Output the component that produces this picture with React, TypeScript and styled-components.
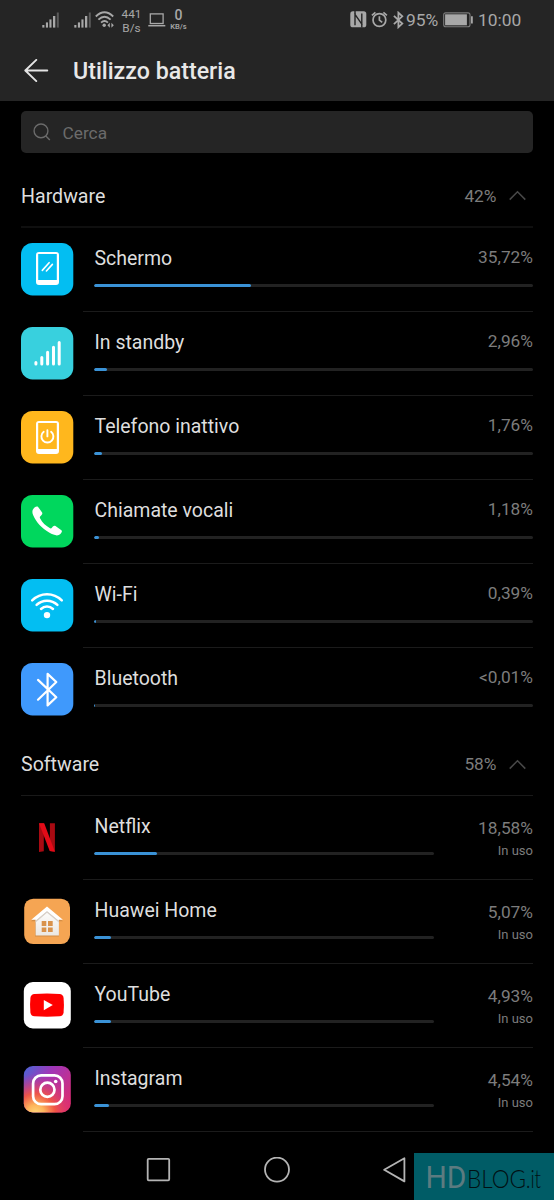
import React from "react";
import styled, { createGlobalStyle } from "styled-components";

const GlobalStyle = createGlobalStyle`
  * { box-sizing: border-box; }
  html, body { margin: 0; background: #000; }
  body { font-family: Roboto, "Liberation Sans", sans-serif; }
  svg { display: block; flex: none; }
`;

const Screen = styled.div`
  width: 554px;
  height: 1200px;
  background: #000;
  display: flex;
  flex-direction: column;
  overflow: hidden;
  position: relative;
`;

const TopArea = styled.header`
  height: 101px;
  flex: none;
  background: #252525;
`;

const StatusBar = styled.div`
  height: 40px;
  display: flex;
  justify-content: space-between;
  padding: 0 33px 0 42px;
  color: #a8a8a8;
`;

const StatusGroup = styled.div`
  display: flex;
  align-items: center;
  height: 39px;
`;

const StatusItem = styled.div<{ $before?: number }>`
  margin-left: ${(p) => p.$before ?? 0}px;
  flex: none;
`;

const Speed = styled.div`
  padding-top: 2px;
  font-size: 11.8px;
  line-height: 14px;
  text-align: center;
`;

const DeviceSpeed = styled.div`
  display: flex;
  flex-direction: column;
  align-items: center;
  font-weight: 500;
  font-size: 14px;
  line-height: 13px;
  width: 18px;
`;

const DeviceUnit = styled.span`
  font-size: 7.6px;
  line-height: 7px;
  margin-top: 1px;
`;

const StatusText = styled.span<{ $before: number; $width: number }>`
  font-size: 17.4px;
  line-height: 20px;
  margin-left: ${(p) => p.$before}px;
  width: ${(p) => p.$width}px;
  white-space: nowrap;
`;

const TitleBar = styled.div`
  height: 61px;
  display: flex;
  align-items: center;
  padding-left: 24px;
  gap: 24px;
`;

const Title = styled.h1`
  margin: 0;
  padding-top: 1px;
  font-size: 23.2px;
  line-height: 28px;
  font-weight: 500;
  color: #e8e8e8;
`;

const SearchBox = styled.div`
  flex: none;
  height: 42px;
  margin: 10px 21px 11px;
  padding-left: 12px;
  border-radius: 5px;
  background: #252525;
  display: flex;
  align-items: center;
  gap: 11.5px;
  font-size: 17.3px;
  color: #6b6b6b;
`;

const SearchHint = styled.span`
  line-height: 20px;
  padding-top: 2px;
`;

const SectionHeader = styled.div<{ $line: number }>`
  flex: none;
  height: 64px;
  margin: 0 21px;
  padding-top: 1px;
  border-bottom: ${(p) => p.$line}px solid ${(p) => (p.$line > 1 ? "#0f0f0f" : "#191919")};
  display: flex;
  align-items: center;
`;

const SectionName = styled.h2`
  margin: 0;
  padding-top: 2px;
  flex: 1;
  font-size: 19.6px;
  line-height: 24px;
  font-weight: 400;
  color: #dedede;
`;

const Value = styled.span`
  font-size: 17.3px;
  line-height: 20px;
  color: #7c7c7c;
`;

const ChevronSlot = styled.div`
  margin: 0 7px 0 12.5px;
`;

const Row = styled.div`
  flex: none;
  height: 84px;
  display: flex;
  padding: 0 21px;
`;

const IconSlot = styled.div`
  width: 62px;
  padding-top: 15px;
`;

const RowBody = styled.div<{ $last?: boolean }>`
  flex: 1;
  display: flex;
  padding-left: 11px;
  border-bottom: 1px solid ${(p) => (p.$last ? "transparent" : "#1b1b1b")};
`;

const Usage = styled.div`
  flex: 1;
  padding-top: 17px;
`;

const NameLine = styled.div`
  display: flex;
  justify-content: space-between;
  align-items: flex-start;
  height: 26px;
  padding-top: 2px;
`;

const Name = styled.span`
  font-size: 19.5px;
  line-height: 24px;
  padding-left: 0.5px;
  color: #dedede;
`;

const Track = styled.div`
  margin-top: 13px;
  height: 3px;
  border-radius: 1.5px;
  background: #222;
  overflow: hidden;
`;

const Fill = styled.div`
  height: 3px;
  border-radius: 1.5px;
  background: #3a92d6;
`;

const SideInfo = styled.div`
  width: 99px;
  padding-top: 22px;
  display: flex;
  flex-direction: column;
  align-items: flex-end;
`;

const Note = styled.span`
  font-size: 13px;
  line-height: 16px;
  margin-top: 5px;
  color: #7c7c7c;
`;

const NavBar = styled.nav`
  height: 68px;
  display: flex;
  align-items: center;
  padding: 8px 0 0 146px;
  gap: 93px;
`;

const Watermark = styled.div`
  position: absolute;
  right: 0;
  bottom: 0;
  width: 140px;
  height: 47px;
  background: #005c66;
`;

const Signal = () => (
  <svg width="18" height="16" viewBox="0 0 18 16" fill="#a8a8a8">
    <rect x="0.3" y="13" width="2.1" height="2.6" />
    <rect x="3.9" y="10.4" width="2.1" height="5.2" />
    <rect x="7.4" y="7.4" width="2.1" height="8.2" />
    <rect x="11" y="4" width="2.3" height="11.6" />
    <rect x="14.8" y="0.5" width="2" height="15.1" fill="#5a5a5a" />
  </svg>
);

const StatusWifi = () => (
  <svg width="20" height="17" viewBox="0 0 20 17" fill="none" stroke="#a8a8a8" strokeWidth="1.9">
    <path d="M0.8 5.5Q9.5 -2.8 18.2 5.5" />
    <path d="M3.4 8.6Q9.5 2.7 15.6 8.6" />
    <path d="M6.1 11.6Q9.5 8.4 12.9 11.6" />
    <circle cx="9.2" cy="14.3" r="1.7" fill="#a8a8a8" stroke="none" />
    <path d="M14.8 11.8v5l-2.4-2.5zM16.4 11.8v5l2.4-2.5z" fill="#a8a8a8" stroke="none" />
  </svg>
);

const Laptop = () => (
  <svg width="18" height="14" viewBox="0 0 18 14" fill="none" stroke="#a8a8a8" strokeWidth="1.3">
    <rect x="2.3" y="0.9" width="12.8" height="9.6" />
    <path d="M0.3 12.7h17" strokeWidth="1.5" />
  </svg>
);

const Nfc = () => (
  <svg width="17" height="17" viewBox="0 0 17 17">
    <rect x="0.3" y="0.3" width="16" height="16" rx="2.6" fill="#a8a8a8" />
    <path d="M5 2.6v11.6M5 3.3l6.8 9.8M11.8 2.4v11.6" fill="none" stroke="#252525" strokeWidth="1.4" />
    <path d="M5 0v3M11.8 13.6v3" stroke="#252525" strokeWidth="1.4" />
  </svg>
);

const Alarm = () => (
  <svg width="17" height="17" viewBox="0 0 17 17" fill="none" stroke="#a8a8a8" strokeWidth="1.7">
    <circle cx="8.4" cy="9" r="6.4" />
    <path d="M8.4 5.2v4l2.8 2.2M0.9 4.3l3.5-3M15.9 4.3l-3.5-3" />
  </svg>
);

const StatusBluetooth = () => (
  <svg width="11" height="18" viewBox="0 0 11 18" fill="none" stroke="#a8a8a8" strokeWidth="1.8">
    <path d="M0.9 4.8l8.4 7.8-3.9 3.6V1.7l3.9 3.6-8.4 7.8" />
  </svg>
);

const Battery = () => (
  <svg width="31" height="16" viewBox="0 0 31 16">
    <rect x="0.7" y="0.9" width="26.3" height="13.9" rx="2" fill="none" stroke="#7c7c7c" strokeWidth="1.1" />
    <rect x="2.1" y="2.3" width="21.8" height="11" fill="#a8a8a8" />
    <path d="M28.9 4.2v7.4" stroke="#a8a8a8" strokeWidth="1.8" />
  </svg>
);

const BackArrow = () => (
  <svg width="25" height="24" viewBox="0 0 25 24" fill="none" stroke="#e4e4e4" strokeWidth="1.9" strokeLinecap="round" strokeLinejoin="round">
    <path d="M12.3 0.9L1.3 11.5l11 10.6M1.5 11.5h21.8" />
  </svg>
);

const SearchIcon = () => (
  <svg width="18" height="18" viewBox="0 0 18 18" fill="none" stroke="#6b6b6b" strokeWidth="1.4">
    <circle cx="8" cy="7.9" r="6.9" />
    <path d="M12.8 12.9l4 4" />
  </svg>
);

const Chevron = () => (
  <svg width="17" height="11" viewBox="0 0 17 11" fill="none" stroke="#484848" strokeWidth="1.5">
    <path d="M0.7 9.6l7.8-7.9 7.8 7.9" />
  </svg>
);

const Tile = ({ color, children }: { color: string; children: React.ReactNode }) => (
  <svg width="53" height="53" viewBox="0 0 53 53" fill="none" stroke="#fff" strokeLinecap="round" strokeLinejoin="round">
    <rect width="52.3" height="52.4" rx="11.5" fill={color} stroke="none" />
    {children}
  </svg>
);

const ScreenIcon = () => (
  <Tile color="#03bef2">
    <path fill="#fff" stroke="none" fillRule="evenodd" d="M18 9h17a3 3 0 0 1 3 3v27a3 3 0 0 1-3 3H18a3 3 0 0 1-3-3V12a3 3 0 0 1 3-3zM17.2 11.1v26h18.6v-26z" />
    <path d="M21.3 27.4l6.8-7.7M25.4 28l6-6.6" strokeWidth="1.6" />
  </Tile>
);

const StandbyIcon = () => (
  <Tile color="#38d0de">
    <path strokeWidth="3" d="M14.9 35.5v1.5M20.8 30.5V37M26.6 25.2V37M32.5 20.2V37M38.2 15.5V37" />
  </Tile>
);

const IdleIcon = () => (
  <Tile color="#ffb71d">
    <path fill="#fff" stroke="none" fillRule="evenodd" d="M18 10h17a3 3 0 0 1 3 3v27a3 3 0 0 1-3 3H18a3 3 0 0 1-3-3V13a3 3 0 0 1 3-3zM17.2 12.1v26h18.6v-26z" />
    <path d="M22.7 20.8a6 6 0 1 0 7.4 0M26.4 19.2v6.2" strokeWidth="1.9" />
  </Tile>
);

const CallIcon = () => (
  <Tile color="#00d75d">
    <path fill="#fff" stroke="none" d="M13.5 12.6c1.3-1.1 2.7-1.7 3.6-.7l4 5.5c.8 1.3-.4 2.7-1.7 3.8-.8.8-.7 1.5-.2 2.4 2.2 4.1 5.3 7.2 9.5 9.5 1 .6 1.7.3 2.4-.6 1-1.2 2-2.1 3.4-1.4l5.9 4.1c1.1.9.2 2.5-1 3.8-2.4 2.4-6.2 1.6-11.3-1.4-7.2-4.2-12.8-10.2-16-17.5-1.3-3.1-.8-5.6 1.4-7.5z" />
  </Tile>
);

const WifiIcon = () => (
  <Tile color="#03bef2">
    <path strokeWidth="2.5" d="M11.2 21.4c8.3-8.2 21.3-8.2 29.6 0M15.6 25.9c5.8-5.7 15-5.7 20.8 0M20 30c3.5-3.3 8.5-3.3 12 0" />
    <circle cx="26" cy="36.1" r="3.2" fill="#fff" stroke="none" />
  </Tile>
);

const BluetoothIcon = () => (
  <Tile color="#3f99fc">
    <path strokeWidth="2.2" d="M17 16.9l18.3 17.4-8.7 8.1V10.9l8.7 8.1L17 36.7" />
  </Tile>
);

const NetflixIcon = () => (
  <svg width="52" height="52" viewBox="0 0 52 52">
    <path d="M18 12.3h4.8v27.9l-4.8.7zM28.9 12.3h5v28.4l-5-.7z" fill="#a80a12" />
    <path d="M18 12.3h5.2l10.7 28.4-5.2-.7z" fill="#e30b18" />
  </svg>
);

const HomeIcon = () => (
  <svg width="52" height="52" viewBox="0 0 52 52">
    <defs>
      <linearGradient id="house" x2="0" y2="1">
        <stop stopColor="#fff" />
        <stop offset="1" stopColor="#ebe7e2" />
      </linearGradient>
    </defs>
    <g transform="translate(0 0.5)">
      <rect x="3.2" y="3.2" width="45.8" height="45.4" rx="9" fill="#f5a553" />
      <path d="M14 25h24v16H14zM10 25.8L26 12l16 13.8H10z" fill="#bd7d3c" opacity="0.6" />
      <path d="M14.6 22L26 13l11.9 9v18H14.6z" fill="url(#house)" />
      <path d="M14.6 24.9L26 15l11.9 9.9V27L26 17.3 14.6 27z" fill="#d7cfc7" />
      <path d="M10.3 24.3L26 10.9l15.9 13.4h-5.1L26 15.4l-10.6 8.9z" fill="#fff" />
      <path d="M20.7 25.6h4.6v4.8h-4.6zM27 25.6h4.7v4.8H27zM20.7 32h4.6v4.4h-4.6zM27 32h4.7v4.4H27z" fill="#d9924b" />
    </g>
  </svg>
);

const YouTubeIcon = () => (
  <svg width="52" height="52" viewBox="0 0 52 52">
    <g transform="translate(0 0.5)">
      <rect x="2.8" y="2.5" width="47" height="46.5" rx="9" fill="#fff" />
      <path d="M13.5 14.5Q26 13.6 38.5 14.5 42.2 14.8 42.6 18.5q.7 7 0 14.2-.4 3.8-4.1 4.1-12.5.9-25 0-3.7-.3-4.1-4.1-.7-7.2 0-14.2.4-3.7 4.1-4z" fill="#f00" />
      <path d="M22.8 20.5v10.2l9-5.1z" fill="#fff" />
    </g>
  </svg>
);

const InstagramIcon = () => (
  <svg width="52" height="52" viewBox="0 0 52 52">
    <defs>
      <linearGradient id="igBase" x1="0" y1="0" x2="1" y2="0.8">
        <stop stopColor="#4668d8" />
        <stop offset="0.4" stopColor="#a036b8" />
        <stop offset="1" stopColor="#dc2b70" />
      </linearGradient>
      <radialGradient id="igGlow" cx="0.25" cy="1.02" r="0.85">
        <stop stopColor="#ffd878" />
        <stop offset="0.22" stopColor="#fdb45c" />
        <stop offset="0.5" stopColor="#f4573f" stopOpacity="0.92" />
        <stop offset="1" stopColor="#d52f86" stopOpacity="0" />
      </radialGradient>
    </defs>
    <g transform="translate(0 0.5)">
      <rect x="2.8" y="2.5" width="47" height="46.5" rx="9" fill="url(#igBase)" />
      <rect x="2.8" y="2.5" width="47" height="46.5" rx="9" fill="url(#igGlow)" />
      <g fill="none" stroke="#fff" strokeWidth="2.7">
        <rect x="12.1" y="11.9" width="29.4" height="28.8" rx="8" />
        <circle cx="26.4" cy="26.2" r="7.1" />
      </g>
      <circle cx="34.7" cy="18" r="1.8" fill="#fff" />
    </g>
  </svg>
);

type Item = { name: string; value: string; share: number; icon: React.ReactNode };

const hardware: Item[] = [
  { name: "Schermo", value: "35,72%", share: 35.72, icon: <ScreenIcon /> },
  { name: "In standby", value: "2,96%", share: 2.96, icon: <StandbyIcon /> },
  { name: "Telefono inattivo", value: "1,76%", share: 1.76, icon: <IdleIcon /> },
  { name: "Chiamate vocali", value: "1,18%", share: 1.18, icon: <CallIcon /> },
  { name: "Wi-Fi", value: "0,39%", share: 0.5, icon: <WifiIcon /> },
  { name: "Bluetooth", value: "<0,01%", share: 0.1, icon: <BluetoothIcon /> },
];

const software: Item[] = [
  { name: "Netflix", value: "18,58%", share: 18.58, icon: <NetflixIcon /> },
  { name: "Huawei Home", value: "5,07%", share: 5.07, icon: <HomeIcon /> },
  { name: "YouTube", value: "4,93%", share: 4.93, icon: <YouTubeIcon /> },
  { name: "Instagram", value: "4,54%", share: 4.54, icon: <InstagramIcon /> },
];

const Section = ({ name, total, line }: { name: string; total: string; line: number }) => (
  <SectionHeader $line={line}>
    <SectionName>{name}</SectionName>
    <Value>{total}</Value>
    <ChevronSlot><Chevron /></ChevronSlot>
  </SectionHeader>
);

export default function App() {
  return (
    <Screen>
      <GlobalStyle />
      <TopArea>
        <StatusBar>
          <StatusGroup>
            <StatusItem><Signal /></StatusItem>
            <StatusItem $before={13.5}><Signal /></StatusItem>
            <StatusItem $before={3.5}><StatusWifi /></StatusItem>
            <StatusItem $before={6.5}>
              <Speed>441<br />B/s</Speed>
            </StatusItem>
            <StatusItem $before={7}><Laptop /></StatusItem>
            <StatusItem $before={3}>
              <DeviceSpeed>0<DeviceUnit>KB/s</DeviceUnit></DeviceSpeed>
            </StatusItem>
          </StatusGroup>
          <StatusGroup>
            <StatusItem><Nfc /></StatusItem>
            <StatusItem $before={4}><Alarm /></StatusItem>
            <StatusItem $before={5}><StatusBluetooth /></StatusItem>
            <StatusText $before={2} $width={32}>95%</StatusText>
            <StatusItem $before={5}><Battery /></StatusItem>
            <StatusText $before={4} $width={43}>10:00</StatusText>
          </StatusGroup>
        </StatusBar>
        <TitleBar>
          <BackArrow />
          <Title>Utilizzo batteria</Title>
        </TitleBar>
      </TopArea>

      <SearchBox><SearchIcon /><SearchHint>Cerca</SearchHint></SearchBox>

      <Section name="Hardware" total="42%" line={2} />
      {hardware.map((item, i) => (
        <Row key={item.name}>
          <IconSlot>{item.icon}</IconSlot>
          <RowBody $last={i === hardware.length - 1}>
            <Usage>
              <NameLine><Name>{item.name}</Name><Value>{item.value}</Value></NameLine>
              <Track><Fill style={{ width: `${item.share}%` }} /></Track>
            </Usage>
          </RowBody>
        </Row>
      ))}

      <Section name="Software" total="58%" line={1} />
      {software.map((item) => (
        <Row key={item.name}>
          <IconSlot>{item.icon}</IconSlot>
          <RowBody>
            <Usage>
              <NameLine><Name>{item.name}</Name></NameLine>
              <Track><Fill style={{ width: `${item.share}%` }} /></Track>
            </Usage>
            <SideInfo><Value>{item.value}</Value><Note>In uso</Note></SideInfo>
          </RowBody>
        </Row>
      ))}

      <NavBar>
        <svg width="25" height="26" viewBox="0 0 25 26" fill="none" stroke="#b4b4b4" strokeWidth="1.8">
          <rect x="1.7" y="1.8" width="21.5" height="21.5" rx="1" />
        </svg>
        <svg width="26" height="26" viewBox="0 0 26 26" fill="none" stroke="#b4b4b4" strokeWidth="1.8">
          <circle cx="13" cy="12.6" r="12" />
        </svg>
        <svg width="24" height="26" viewBox="0 0 24 26" fill="none" stroke="#b4b4b4" strokeWidth="1.8" strokeLinejoin="round">
          <path d="M21.4 1.2v23.2L1.2 12.8z" />
        </svg>
      </NavBar>

      <Watermark>
        <svg width="140" height="47" viewBox="0 0 140 47">
          <text x="11.5" y="35" fontFamily="Roboto, sans-serif" fontSize="32" fill="#5c7b80" textLength="41" lengthAdjust="spacingAndGlyphs">HD</text>
          <text x="53" y="35" fontFamily="Lato, sans-serif" fontSize="26" fontWeight="300" fill="#021013" textLength="59" lengthAdjust="spacingAndGlyphs">BLOG</text>
          <text x="112" y="35" fontFamily="Lato, sans-serif" fontSize="25" fontWeight="300" fill="#021013" textLength="15" lengthAdjust="spacingAndGlyphs">.it</text>
        </svg>
      </Watermark>
    </Screen>
  );
}
